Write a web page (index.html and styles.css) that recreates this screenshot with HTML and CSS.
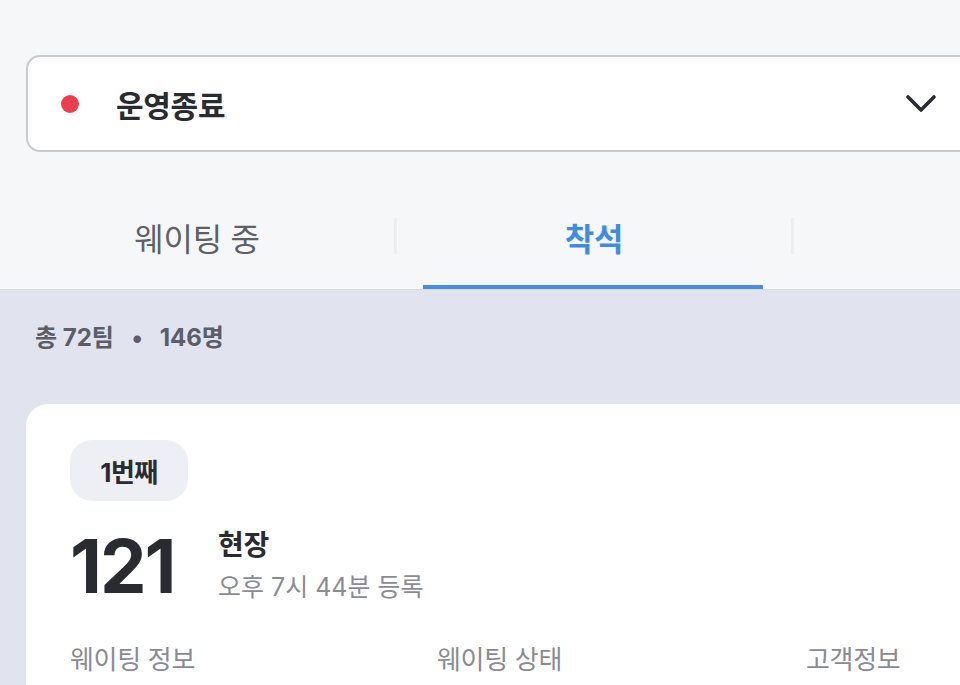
FILE: index.html
```html
<!DOCTYPE html>
<html lang="ko">
<head>
<meta charset="utf-8">
<link rel="stylesheet" href="styles.css">
</head>
<body>
<div class="page">
  <header class="top">
    <div class="select">
      <span class="dot"></span>
      <span class="select-label">운영종료</span>
      <svg class="chev" width="32" height="20" viewBox="0 0 32 20"><path d="M3 3 L16 16 L29 3" fill="none" stroke="#2a2b31" stroke-width="3.6" stroke-linecap="round" stroke-linejoin="round"/></svg>
    </div>
    <nav class="tabs">
      <div class="tab">웨이팅 중</div>
      <span class="sep"></span>
      <div class="tab active">착석</div>
      <span class="sep"></span>
      <div class="tab"></div>
    </nav>
  </header>
  <main class="body">
    <div class="summary">총 72팀 <span class="bullet">•</span> 146명</div>
    <section class="card">
      <div class="badge">1번째</div>
      <div class="head">
        <div class="num">121</div>
        <div class="meta">
          <div class="kind">현장</div>
          <div class="time">오후 7시 44분 등록</div>
        </div>
      </div>
      <div class="cols">
        <div class="col">웨이팅 정보</div>
        <div class="col">웨이팅 상태</div>
        <div class="col">고객정보</div>
      </div>
    </section>
  </main>
</div>
</body>
</html>
```

FILE: styles.css
```css
* { box-sizing: border-box; }
html, body { margin: 0; padding: 0; }
body {
  font-family: "Inter", "Noto Sans CJK KR", sans-serif;
  color: #2a2b31;
  background: #e1e3ee;
}
.page { width: 960px; height: 685px; overflow: hidden; }
.top { background: #f6f7f9; padding-top: 55px; }
.select {
  display: flex;
  align-items: center;
  height: 97px;
  margin: 0 -30px 0 26px;
  background: #fff;
  border: 2px solid #c9cad0;
  border-radius: 14px;
  padding: 0 51px 0 33px;
}
.dot { width: 18px; height: 18px; border-radius: 50%; background: #e8404d; flex: none; }
.select-label {
  margin-left: 37px;
  font-size: 30px;
  font-weight: 700;
  flex: 1;
  letter-spacing: -0.3px;
}
.chev { flex: none; }
.tabs {
  display: flex;
  align-items: center;
  margin-top: 38px;
  height: 100px;
  border-bottom: 1px solid #d8d9de;
}
.tab {
  position: relative;
  flex: none;
  width: 394px;
  height: 100%;
  display: flex;
  align-items: center;
  justify-content: center;
  padding-bottom: 6px;
  font-size: 32px;
  color: #5e5f67;
  letter-spacing: -0.3px;
}
.tab.active { color: #3f8ce0; font-weight: 700; }
.tab.active::after {
  content: "";
  position: absolute;
  left: 26px; right: 28px; bottom: 0;
  height: 4px;
  background: #4a8ddf;
}
.sep { flex: none; width: 3px; height: 36px; background: #eceef2; margin-bottom: 7px; }
.body { padding: 33px 0 0 26px; }
.summary {
  padding-left: 9px;
  font-size: 24px;
  font-weight: 700;
  color: #5b5d69;
  line-height: 30px;
}
.bullet { margin: 0 11px 0 12px; }
.card {
  margin-top: 51px;
  margin-right: -40px;
  background: #fff;
  border-radius: 22px;
  padding: 36px 0 40px 44px;
}
.badge {
  display: inline-flex;
  align-items: center;
  justify-content: center;
  width: 118px;
  height: 61px;
  border-radius: 22px;
  background: #eeeff4;
  font-size: 26px;
  font-weight: 700;
  letter-spacing: -0.5px;
}
.head { display: flex; align-items: center; margin-top: 20px; }
.num {
  font-size: 74px;
  font-weight: 700;
  line-height: 90px;
  letter-spacing: -2px;
  width: 148px;
}
.meta { display: flex; flex-direction: column; }
.kind { font-size: 28px; font-weight: 700; line-height: 36px; letter-spacing: -0.3px; }
.time { font-size: 25px; color: #8b8c93; line-height: 36px; margin-top: 6px; letter-spacing: 0; }
.cols { display: grid; grid-template-columns: 367px 369px 300px; margin-top: 28px; }
.col { font-size: 26px; color: #8a8b92; letter-spacing: -0.3px; }
```
